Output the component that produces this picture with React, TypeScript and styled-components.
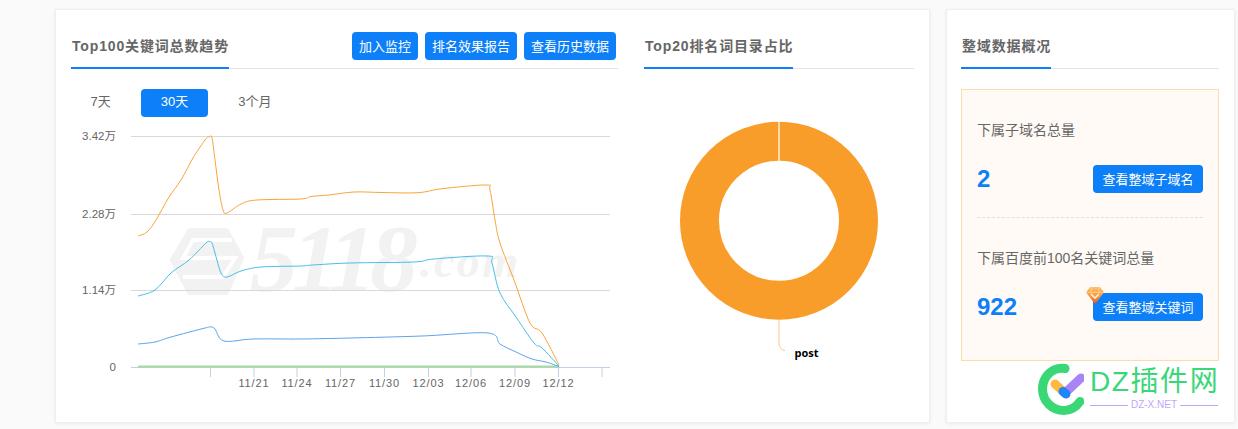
import * as React from "react";
import styled, { createGlobalStyle } from "styled-components";

const BLUE = "#0d7ff8";

const GlobalStyle = createGlobalStyle`
  html, body {
    margin: 0;
    padding: 0;
    background: #fafafa;
    font-family: "Liberation Sans", "Noto Sans CJK SC", sans-serif;
    color: #666;
  }
  * { box-sizing: border-box; }
`;

const Page = styled.div`
  display: flex;
  gap: 16px;
  width: 1238px;
  height: 429px;
  padding: 9px 0 0 55px;
`;

const Card = styled.section<{ $width: number; $inset: number }>`
  position: relative;
  display: flex;
  gap: 26px;
  width: ${(p) => p.$width}px;
  height: 414px;
  padding: 0 ${(p) => p.$inset}px;
  background: #fff;
  border: 1px solid #eee;
  box-shadow: 0 1px 4px rgba(0, 0, 0, 0.06);
`;

const Pane = styled.div<{ $width: number }>`
  width: ${(p) => p.$width}px;
  flex: none;
`;

const Header = styled.header`
  display: flex;
  justify-content: space-between;
  align-items: flex-end;
  height: 59px;
  border-bottom: 1px solid #e5e5e5;
`;

const Title = styled.h2`
  margin: 0 0 -1px;
  padding: 0 0 11px 1px;
  border-bottom: 2px solid ${BLUE};
  font-size: 14px;
  line-height: 20px;
  font-weight: 700;
  letter-spacing: 0.85px;
  color: #666;
`;

const HeaderActions = styled.div`
  display: flex;
  gap: 7px;
  margin: 0 2px 8px 0;
`;

const Button = styled.button`
  position: relative;
  height: 28px;
  padding: 0 7px 2px;
  border: 0;
  border-radius: 4px;
  background: ${BLUE};
  color: #fff;
  font: 13px "Liberation Sans", "Noto Sans CJK SC", sans-serif;
  white-space: nowrap;
`;

const Tabs = styled.div`
  display: flex;
  gap: 10px;
  margin: 20px 0 8px -0.5px;
`;

const Tab = styled.div<{ $active?: boolean }>`
  height: 28px;
  padding: 0 20px;
  border-radius: 4px;
  font-size: 13px;
  line-height: 26px;
  background: ${(p) => (p.$active ? BLUE : "transparent")};
  color: ${(p) => (p.$active ? "#fff" : "#666")};
`;

const ChartSvg = styled.svg`
  display: block;
  width: 547px;
  height: 270px;
`;

const DonutSvg = styled.svg`
  display: block;
  width: 270px;
  height: 340px;
`;

const StatBox = styled.div`
  height: 272px;
  margin-top: 20px;
  padding: 0 15px;
  background: #fffaf5;
  border: 1px solid #fbdcaa;
`;

const Stat = styled.div<{ $divided?: boolean }>`
  padding: 30px 0 24px;
  border-bottom: ${(p) => (p.$divided ? "1px dashed #e3e0da" : "0")};
`;

const StatLabel = styled.div`
  font-size: 14px;
  line-height: 20px;
  color: #666;
`;

const StatRow = styled.div`
  display: flex;
  justify-content: space-between;
  align-items: center;
  margin-top: 25px;
`;

const StatValue = styled.div`
  font-size: 24px;
  font-weight: 700;
  color: ${BLUE};
`;

const StatButton = styled(Button)`
  width: 110px;
  padding: 0 0 2px;
`;

const Diamond = styled.svg`
  position: absolute;
  left: -7px;
  top: -6px;
  width: 18px;
  height: 17px;
`;

const Watermark = styled.div`
  position: absolute;
  left: 91px;
  top: 353px;
  display: flex;
  gap: 7px;
`;

const WatermarkLogo = styled.svg`
  width: 46px;
  height: 52px;
  flex: none;
`;

const WatermarkText = styled.div`
  width: 128px;
  margin-top: 1px;
  margin-left: -1px;
`;

const WatermarkName = styled.div`
  font-size: 28px;
  line-height: 36px;
  letter-spacing: 1.6px;
  color: #3ad777;
  white-space: nowrap;
`;

const WatermarkRule = styled.div`
  display: flex;
  align-items: center;
  gap: 3px;
  margin-top: -1px;
  font-size: 10px;
  line-height: 12px;
  color: #c0a8f8;
  white-space: nowrap;

  &::before,
  &::after {
    content: "";
    flex: 1;
    height: 1px;
    background: #bda6f6;
  }
`;

type Point = [number, number];

// catmull-rom through the sampled points, good enough for the echarts look
function smoothPath(points: Point[]) {
  let d = `M${points[0][0]} ${points[0][1]}`;
  for (let i = 0; i < points.length - 1; i++) {
    const p0 = points[Math.max(i - 1, 0)];
    const p1 = points[i];
    const p2 = points[i + 1];
    const p3 = points[Math.min(i + 2, points.length - 1)];
    const c1x = p1[0] + (p2[0] - p0[0]) / 6;
    const c1y = p1[1] + (p2[1] - p0[1]) / 6;
    const c2x = p2[0] - (p3[0] - p1[0]) / 6;
    const c2y = p2[1] - (p3[1] - p1[1]) / 6;
    d += `C${c1x} ${c1y} ${c2x} ${c2y} ${p2[0]} ${p2[1]}`;
  }
  return d;
}

const orangeLine: Point[] = [
  [138, 236], [147, 232], [156, 220], [169, 197], [181, 180], [193, 158], [205, 140], [209, 137],
  [212, 138], [215, 160], [219, 190], [223, 210], [227, 213], [241, 204], [257, 200], [301, 199],
  [311, 196.5], [329, 195], [354, 192], [382, 192.5], [418, 192.7], [442, 188.7], [486, 185], [490, 190],
  [495, 220], [500, 243], [514, 280], [530, 323], [542, 333], [559, 365],
];

const cyanLine: Point[] = [
  [138, 296], [155, 290], [171, 273], [189, 260], [206, 243], [209, 241.5], [212, 243], [215, 253],
  [221, 273], [227, 277], [241, 271], [261, 267], [301, 266], [313, 265], [350, 263], [414, 262],
  [434, 259], [488, 256], [492, 263], [500, 293], [516, 317], [534, 343], [542, 348], [559, 366],
];

const blueLine: Point[] = [
  [138, 344], [155, 342], [171, 337], [205, 328], [211, 327], [215, 329], [224, 341], [253, 339],
  [301, 339], [350, 338], [422, 336], [488, 333], [500, 344], [516, 352], [532, 359], [546, 362],
  [559, 366.5],
];

const yTicks = [
  { y: 136, label: "3.42万" },
  { y: 214, label: "2.28万" },
  { y: 290, label: "1.14万" },
  { y: 367, label: "0" },
];

const xTicks = [210.5, 254, 297, 340.5, 384.5, 428.5, 471, 515, 558.5, 602];
const xLabels = ["11/21", "11/24", "11/27", "11/30", "12/03", "12/06", "12/09", "12/12"];

function TrendChart() {
  return (
    <ChartSvg viewBox="71 125 547 270">
      <g fill="#f2f2f2">
        <path d="M190 231H226L241 258L226 292H190L173 260Z" stroke="#f2f2f2" strokeWidth="6" strokeLinejoin="round" />
        <text x="250" y="291" fontFamily="Liberation Serif" fontSize="96" fontStyle="italic" fontWeight="700" textLength="168">
          5118
        </text>
        <text x="420" y="277" fontFamily="Liberation Serif" fontSize="46" fontStyle="italic" fontWeight="700" textLength="98">
          .com
        </text>
      </g>
      <path d="M232 240H193L183 258H235L223 277H183" fill="none" stroke="#fff" strokeWidth="4" />
      {yTicks.slice(0, 3).map((t) => (
        <line key={t.y} x1="131" x2="610" y1={t.y + 0.5} y2={t.y + 0.5} stroke="#d9d9d9" />
      ))}
      <line x1="131" x2="610" y1="367.5" y2="367.5" stroke="#c3d0e0" />
      {xTicks.map((x) => (
        <line key={x} x1={x} x2={x} y1="367" y2="377" stroke="#c3d0e0" />
      ))}
      {yTicks.map((t) => (
        <text key={t.label} x="116" y={t.y + 4} textAnchor="end" fontSize="11.5" fill="#666">
          {t.label}
        </text>
      ))}
      {xLabels.map((label, i) => (
        <text key={label} x={xTicks[i + 1]} y="387" textAnchor="middle" fontSize="11" letterSpacing="0.9" fill="#666">
          {label}
        </text>
      ))}
      <line x1="138" x2="559" y1="366.5" y2="366.5" stroke="#a5dba0" strokeWidth="2" />
      <path d={smoothPath(blueLine)} fill="none" stroke="#5aa5ee" />
      <path d={smoothPath(cyanLine)} fill="none" stroke="#45bfe8" />
      <path d={smoothPath(orangeLine)} fill="none" stroke="#f9a43c" />
    </ChartSvg>
  );
}

function ShareDonut() {
  return (
    <DonutSvg viewBox="644 69 270 340">
      <circle cx="779" cy="220.8" r="79.5" fill="none" stroke="#f99d2a" strokeWidth="39" />
      <line x1="779" x2="779" y1="121" y2="161" stroke="#fff2e0" strokeWidth="1.4" />
      <path d="M779 320V342Q779 350 785 350.500" fill="none" stroke="#fbc88c" />
      <text x="794.500" y="357" fontFamily="Open Sans" fontSize="11" fontWeight="700" fill="#000">
        post
      </text>
    </DonutSvg>
  );
}

export default function App() {
  return (
    <Page>
      <GlobalStyle />
      <Card $width={875} $inset={15}>
        <Pane $width={547}>
          <Header>
            <Title>Top100关键词总数趋势</Title>
            <HeaderActions>
              <Button>加入监控</Button>
              <Button>排名效果报告</Button>
              <Button>查看历史数据</Button>
            </HeaderActions>
          </Header>
          <Tabs>
            <Tab>7天</Tab>
            <Tab $active>30天</Tab>
            <Tab>3个月</Tab>
          </Tabs>
          <TrendChart />
        </Pane>
        <Pane $width={270}>
          <Header>
            <Title>Top20排名词目录占比</Title>
          </Header>
          <ShareDonut />
        </Pane>
      </Card>
      <Card $width={289} $inset={14}>
        <Pane $width={258}>
          <Header>
            <Title>整域数据概况</Title>
          </Header>
          <StatBox>
            <Stat $divided>
              <StatLabel>下属子域名总量</StatLabel>
              <StatRow>
                <StatValue>2</StatValue>
                <StatButton>查看整域子域名</StatButton>
              </StatRow>
            </Stat>
            <Stat>
              <StatLabel>下属百度前100名关键词总量</StatLabel>
              <StatRow>
                <StatValue>922</StatValue>
                <StatButton>
                  <Diamond viewBox="0 0 18 17">
                    <defs>
                      <linearGradient id="gem" x1="0" y1="0" x2="0" y2="1">
                        <stop offset="0" stopColor="#fcc06a" />
                        <stop offset="0.6" stopColor="#f6943a" />
                        <stop offset="1" stopColor="#e2561a" />
                      </linearGradient>
                    </defs>
                    <path d="M4 0H14L18 5.500L9 17L0 5.500Z" fill="url(#gem)" />
                    <path d="M0 5.500H18M6 0L4.500 5.500M12 0L13.500 5.500" fill="none" stroke="#fddca8" strokeWidth="0.7" />
                    <path d="M5 7L9 11L13 7" fill="none" stroke="#fff0d8" strokeWidth="1.600" />
                  </Diamond>
                  查看整域关键词
                </StatButton>
              </StatRow>
            </Stat>
          </StatBox>
        </Pane>
        <Watermark>
          <WatermarkLogo viewBox="0 0 46 52">
            <path d="M27 5.500C14 3.500 4.500 14 4.500 26C4.500 38 14 47.500 26 47.500C32 47.500 37.500 45 42 38.500" fill="none" stroke="#3ad777" strokeWidth="9" strokeLinecap="round" />
            <path d="M17 21L27 30" stroke="#fdb93d" strokeWidth="9" strokeLinecap="round" />
            <path d="M27 30L43 15" stroke="#a884f5" strokeWidth="9" strokeLinecap="round" />
            <path d="M25 28.500L28 31" stroke="#1d85f8" strokeWidth="9" strokeLinecap="round" />
          </WatermarkLogo>
          <WatermarkText>
            <WatermarkName>DZ插件网</WatermarkName>
            <WatermarkRule>DZ-X.NET</WatermarkRule>
          </WatermarkText>
        </Watermark>
      </Card>
    </Page>
  );
}
